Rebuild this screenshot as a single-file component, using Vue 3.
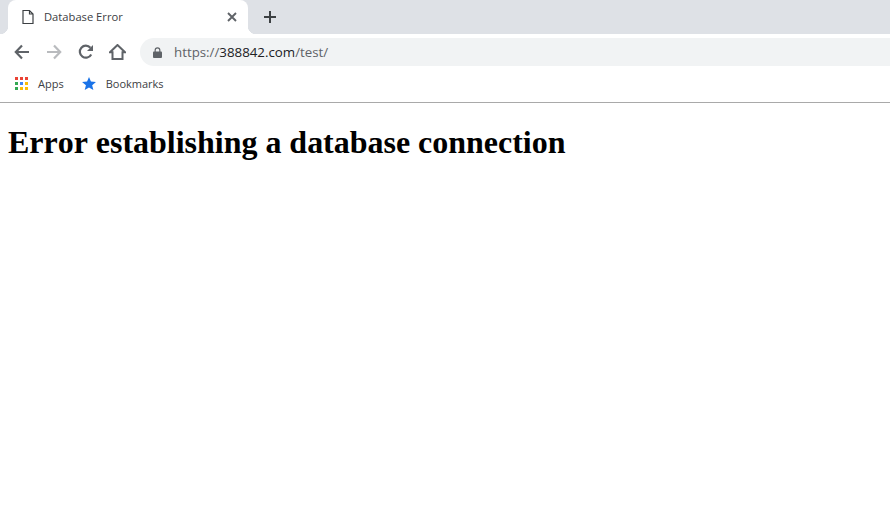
<script setup>
const dots = ['#ea4335', '#ea4335', '#ea4335', '#34a853', '#4285f4', '#fbbc05', '#34a853', '#fbbc05', '#fbbc05']
</script>

<template>
  <div class="browser">
    <div class="tabstrip">
      <div class="tab">
        <svg class="page-icon" width="16" height="16" viewBox="0 0 16 16">
          <path d="M3 1.500h6.500L13 5v9.500H3z M9.500 1.500V5H13" fill="none" stroke="#3c4043" stroke-width="1.200" />
        </svg>
        <span class="tab-title">Database Error</span>
        <svg class="tab-close" width="10" height="10" viewBox="0 0 10 10">
          <path d="M1 1l8 8M9 1l-8 8" stroke="#5f6368" stroke-width="1.900" />
        </svg>
      </div>
      <svg class="new-tab" width="12" height="12" viewBox="0 0 12 12">
        <path d="M6 0v12M0 6h12" stroke="#3c4043" stroke-width="2" />
      </svg>
    </div>

    <div class="toolbar">
      <svg class="nav" width="16" height="16" viewBox="0 0 16 16">
        <path d="M15 8H2M8 1.500L1.800 8 8 14.500" fill="none" stroke="#5f6368" stroke-width="2.200" />
      </svg>
      <svg class="nav" width="16" height="16" viewBox="0 0 16 16">
        <path d="M1 8h13M8 1.500L14.200 8 8 14.500" fill="none" stroke="#b9bbbe" stroke-width="2.200" />
      </svg>
      <svg class="nav" width="16" height="16" viewBox="0 0 16 16">
        <path d="M13.200 10.400A6 6 0 1 1 12.400 3.800" fill="none" stroke="#5f6368" stroke-width="2.200" />
        <path d="M15 1v6H9z" fill="#5f6368" />
      </svg>
      <svg class="nav" width="17" height="16" viewBox="0 0 17 16">
        <path d="M8.500 1L1 8.200h2.500V15h10V8.200H16z" fill="none" stroke="#5f6368" stroke-width="2" />
      </svg>
      <div class="omnibox">
        <svg class="lock" width="9" height="11" viewBox="0 0 10 12">
          <path d="M1 5h8a1 1 0 0 1 1 1v5a1 1 0 0 1-1 1H1a1 1 0 0 1-1-1V6a1 1 0 0 1 1-1z" fill="#5f6368" />
          <path d="M2.400 5.500V3.400a2.600 2.600 0 0 1 5.200 0v2.100" fill="none" stroke="#5f6368" stroke-width="1.300" />
        </svg>
        <span class="url"><span class="muted">https://</span>388842.com<span class="muted">/test/</span></span>
      </div>
    </div>

    <div class="bookmarks">
      <div class="bookmark">
        <div class="apps-grid">
          <i v-for="(c, i) in dots" :key="i" :style="{ background: c }"></i>
        </div>
        <span>Apps</span>
      </div>
      <div class="bookmark">
        <svg width="14" height="13" viewBox="0 0 15 14">
          <path d="M7.500 0l2.100 4.900 5.400.4-4.100 3.500 1.300 5.200-4.700-2.800-4.600 2.800 1.300-5.200L0 5.300l5.400-.4z" fill="#1a73e8" />
        </svg>
        <span>Bookmarks</span>
      </div>
    </div>
  </div>

  <h1>Error establishing a database connection</h1>
</template>

<style scoped>
.browser {
  font-family: "Open Sans", "Liberation Sans", sans-serif;
  border-bottom: 1px solid #a9a9a9;
}

.tabstrip {
  height: 34px;
  background: #dee1e6;
  display: flex;
  align-items: center;
  padding-left: 8px;
}

.tab {
  position: relative;
  width: 240px;
  height: 34px;
  box-sizing: border-box;
  background: #fff;
  border-radius: 8px 8px 0 0;
  display: flex;
  align-items: center;
  padding-left: 12px;
  padding-right: 11px;
}

.tab::before,
.tab::after {
  content: "";
  position: absolute;
  bottom: 0;
  width: 8px;
  height: 8px;
}

.tab::before {
  left: -8px;
  background: radial-gradient(circle at 0 0, transparent 8px, #fff 8.500px);
}

.tab::after {
  right: -8px;
  background: radial-gradient(circle at 100% 0, transparent 8px, #fff 8.500px);
}

.page-icon {
  flex: none;
}

.tab-title {
  margin-left: 8px;
  margin-bottom: 1px;
  flex: 1;
  font-size: 11.200px;
  color: #3c4043;
}

.new-tab {
  margin-left: 16px;
}

.toolbar {
  height: 36px;
  display: flex;
  align-items: center;
  background: #fff;
  padding-left: 14px;
}

.nav {
  flex: none;
  margin-right: 16px;
}

.nav:nth-child(4) {
  margin-left: -1px;
}

.omnibox {
  flex: 1;
  height: 28px;
  margin-left: -2px;
  background: #f1f3f4;
  border-radius: 14px 0 0 14px;
  display: flex;
  align-items: center;
  padding-left: 13px;
}

.url {
  margin-left: 12px;
  font-size: 13.300px;
  color: #202124;
}

.muted {
  color: #5f6368;
}

.bookmarks {
  height: 27px;
  padding-bottom: 5px;
  display: flex;
  align-items: center;
  padding-left: 15px;
  gap: 18px;
  font-size: 11px;
  color: #3c4043;
}

.bookmark {
  display: flex;
  align-items: center;
  gap: 10px;
}

.apps-grid {
  display: grid;
  grid-template-columns: repeat(3, 3px);
  grid-auto-rows: 3px;
  gap: 2px;
}

h1 {
  margin: 21.440px 8px;
  font-family: "Liberation Serif", serif;
  font-size: 32px;
  font-weight: bold;
  font-kerning: none;
  letter-spacing: -0.020px;
  color: #000;
}
</style>

<style>
body {
  background: #fff;
}
</style>
